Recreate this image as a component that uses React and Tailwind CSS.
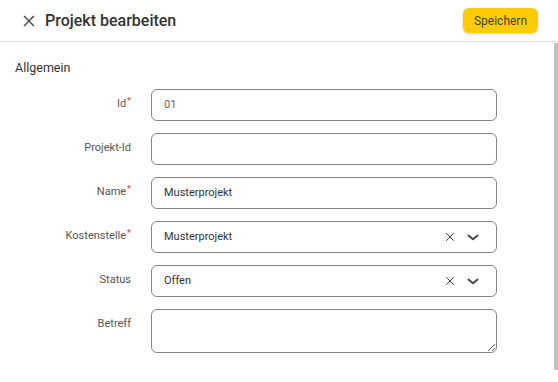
import React from "react";

const Label = ({ text, required }) => (
  <div className="w-[116px] shrink-0 pt-[7px] text-right text-[11px] leading-4 text-[#555]">
    {text}
    {required && <span className="relative -top-[3px] ml-px text-[9px] text-[#e53935]">*</span>}
  </div>
);

const XIcon = ({ className }) => (
  <svg viewBox="0 0 24 24" className={className} fill="none" stroke="currentColor" strokeWidth="2" strokeLinecap="round">
    <path d="M5 5l14 14M19 5L5 19" />
  </svg>
);

const Chevron = () => (
  <svg viewBox="0 0 24 24" className="h-[18px] w-[18px]" fill="none" stroke="currentColor" strokeWidth="2.6" strokeLinecap="round" strokeLinejoin="round">
    <path d="M6 10l6 5 6-5" />
  </svg>
);

const TextInput = ({ value, muted }) => (
  <div className={`flex h-8 w-[346px] items-center rounded-md border border-[#858585] pl-3 text-[11px] ${muted ? "text-[#666]" : "text-[#333]"}`}>
    {value}
  </div>
);

const SelectInput = ({ value }) => (
  <div className="flex h-8 w-[346px] items-center rounded-md border border-[#858585] pl-3 pr-[14px] text-[11px] text-[#333]">
    <span className="flex-1">{value}</span>
    <XIcon className="mr-2 h-3 w-3 text-[#444]" />
    <span className="text-[#444]">
      <Chevron />
    </span>
  </div>
);

const Row = ({ label, required, children }) => (
  <div className="flex gap-5">
    <Label text={label} required={required} />
    {children}
  </div>
);

export default function App() {
  return (
    <div className="flex h-[382px] w-[558px] flex-col overflow-hidden bg-white font-['Roboto',sans-serif]">
      <header className="flex h-[42px] shrink-0 items-center border-b border-[#e2e2e2] pl-[21px] pr-[20px]">
        <XIcon className="h-4 w-4 text-[#444]" />
        <h1 className="ml-2 flex-1 text-[16px] font-medium text-[#333]">Projekt bearbeiten</h1>
        <button className="h-[25px] w-[75px] rounded-md bg-[#ffcb05] text-[12px] text-[#444] shadow-[0_1px_3px_rgba(0,0,0,0.2)]">
          Speichern
        </button>
      </header>
      <div className="flex flex-1">
        <main className="flex-1 pl-[15px] pt-[18px]">
          <h2 className="text-[12.5px] leading-4 text-[#333]">Allgemein</h2>
          <div className="mt-[13px] flex flex-col gap-3">
            <Row label="Id" required>
              <TextInput value="01" muted />
            </Row>
            <Row label="Projekt-Id">
              <TextInput value="" />
            </Row>
            <Row label="Name" required>
              <TextInput value="Musterprojekt" />
            </Row>
            <Row label="Kostenstelle" required>
              <SelectInput value="Musterprojekt" />
            </Row>
            <Row label="Status">
              <SelectInput value="Offen" />
            </Row>
            <Row label="Betreff">
              <textarea className="h-[44px] w-[346px] rounded-md border border-[#858585] px-3 py-2 text-[11px] text-[#333] outline-none" />
            </Row>
          </div>
        </main>
        <div className="w-[4px] shrink-0 pt-px">
          <div className="h-[327px] bg-[#c1c1c1]" />
        </div>
      </div>
    </div>
  );
}
